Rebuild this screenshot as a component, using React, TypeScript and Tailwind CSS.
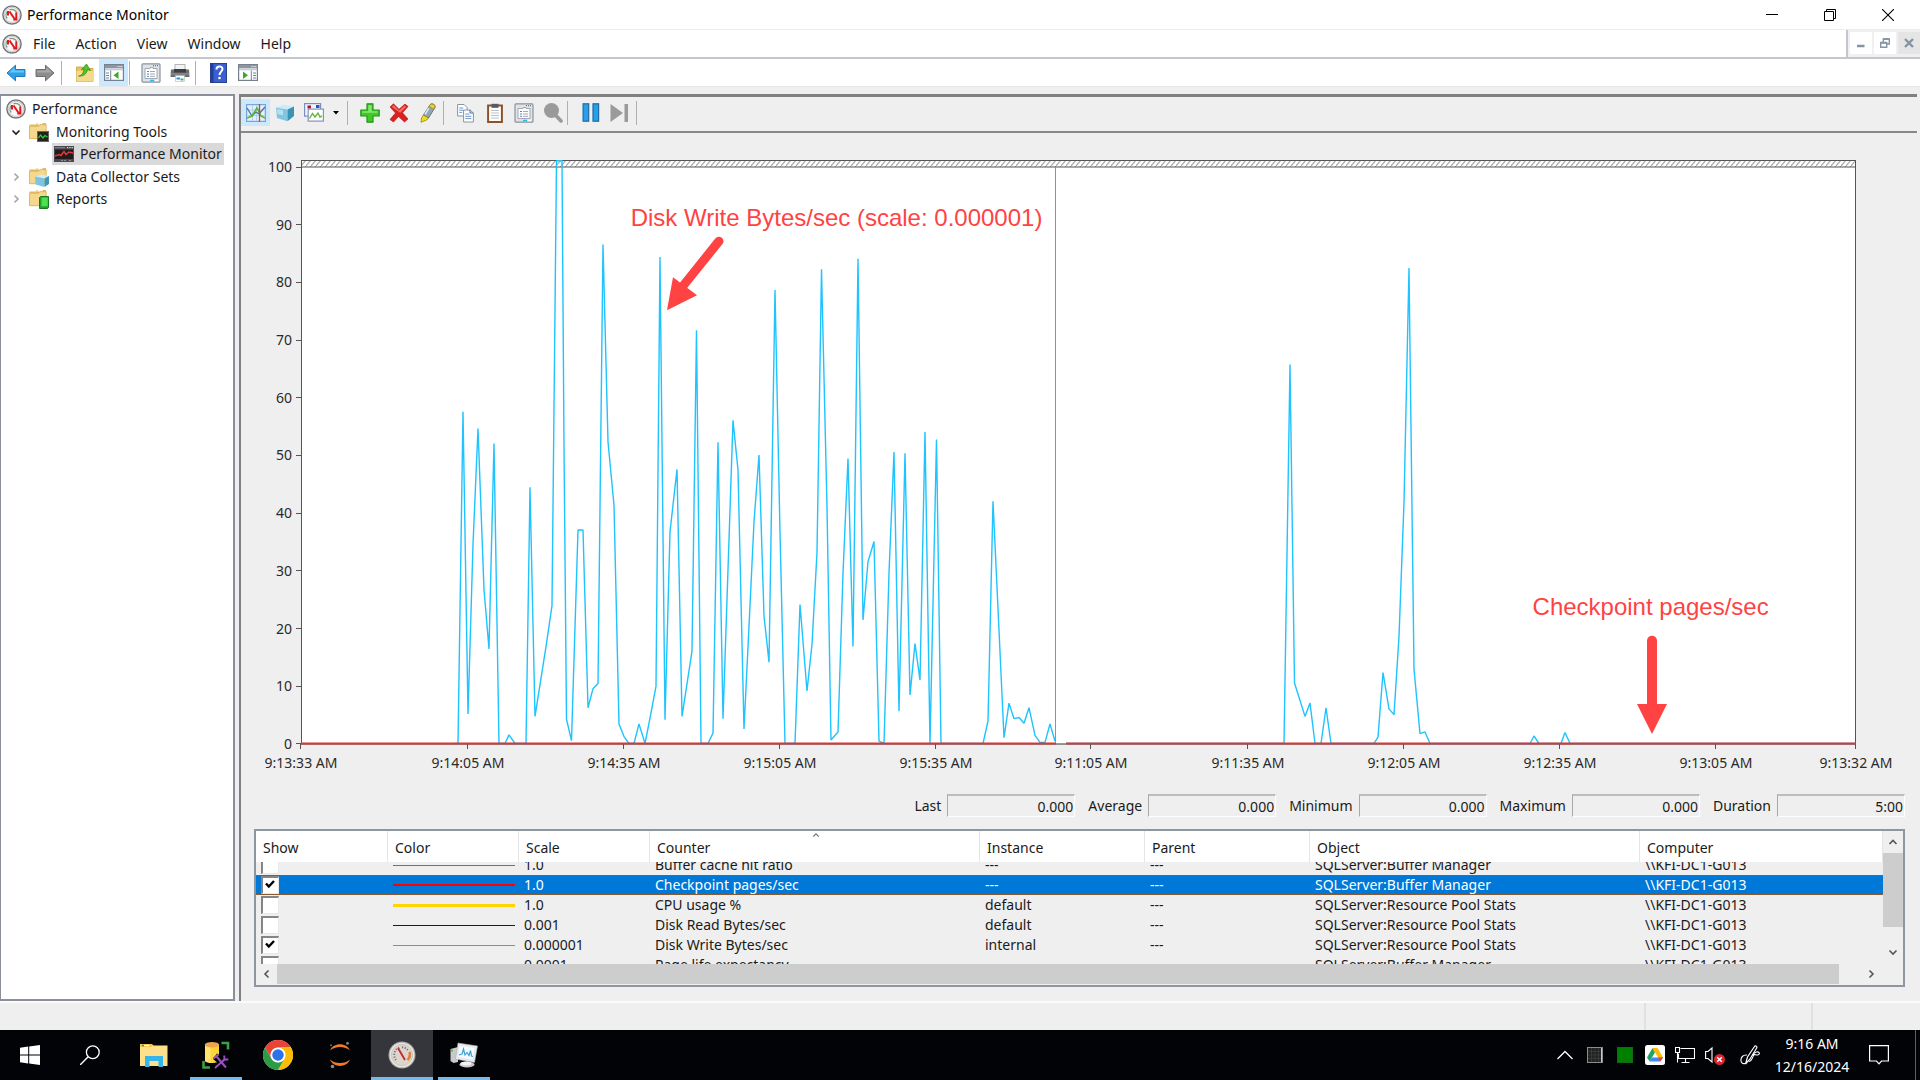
import { useLayoutEffect, useRef, type ReactNode } from "react";

const PLOT_W = 1555;
const PLOT_H = 583;
const BASE_Y = 583;
const UNIT = 5.76;

const writeBytes: [number, number][] = [
  [154, 0], [157, 0], [162, 57.5], [167, 5.1], [172, 34.5], [177, 54.6], [183, 26.7], [188, 16.4], [193, 52], [198, 0],
  [204, 0], [208, 1.5], [214, 0], [225, 0], [229, 44.4], [234, 4.7], [245, 16.8], [251, 23.9], [255.5, 101], [261, 101],
  [263, 51.5], [265.5, 4.2], [270.5, 0.5], [277, 37], [282, 37], [287, 6.2], [292, 9.5], [297, 10.4], [302, 86.5],
  [307, 52.3], [313, 41.3], [318, 3.4], [323, 1.2], [328, 0], [333, 0], [338, 3.4], [344, 0], [349, 4.4], [355, 9.9],
  [359, 84.3], [364, 4.1], [369, 36.7], [376, 47.5], [381, 4.7], [391, 16], [395.5, 71.6], [400, 0], [407, 0], [412, 1.8],
  [417, 52.2], [422, 4.3], [432, 56], [437, 47.4], [443, 2.5], [448, 20.3], [453, 38.4], [458, 50], [463, 22.1],
  [468, 14.1], [474, 78.6], [479, 36.6], [484, 0], [494, 0], [499, 24.1], [506, 9.1], [511, 17.2], [516, 33.1],
  [520.5, 82.2], [526, 40.9], [530, 0.6], [537, 2], [542, 29.5], [547, 49.4], [552, 16.8], [557, 84], [562, 21.4],
  [567, 31.5], [573, 35], [578, 0.4], [583, 0], [588, 29.5], [593, 50.5], [598, 5.6], [604, 50.3], [609, 8.4],
  [614, 17.3], [619, 11], [624, 54], [629, 0], [635.5, 52.7], [640, 0], [682, 0], [687, 3.9], [692, 42], [703, 1],
  [708, 7], [713, 4.3], [718, 4.5], [723, 3.5], [728, 6.2], [734, 1.4], [739, 0.2], [744, 0.2], [749, 3.4], [754, 0.4],
];

const writeBytesOlder: [number, number][] = [
  [765, 0], [983, 0], [989, 65.7], [993.5, 10.5], [1004, 4.7], [1009, 7], [1014, 0], [1020, 0], [1025, 6.2], [1030, 0],
  [1073, 0], [1077, 1.1], [1082, 12.3], [1088, 6], [1093, 5], [1098, 18.5], [1103, 41.8], [1108, 82.4], [1113, 12.9],
  [1119, 1.7], [1124, 2], [1129, 0], [1229, 0], [1233, 1.3], [1238, 0], [1260, 0], [1264, 1.9], [1269, 0], [1554, 0],
];

const toPoints = (data: [number, number][]) => data.map(([x, v]) => `${x},${BASE_Y - 0.5 - v * UNIT}`).join(" ");

const timeTicks = [
  { x: 0, label: "9:13:33 AM" },
  { x: 167, label: "9:14:05 AM" },
  { x: 323, label: "9:14:35 AM" },
  { x: 479, label: "9:15:05 AM" },
  { x: 635, label: "9:15:35 AM" },
  { x: 790, label: "9:11:05 AM" },
  { x: 947, label: "9:11:35 AM" },
  { x: 1103, label: "9:12:05 AM" },
  { x: 1259, label: "9:12:35 AM" },
  { x: 1415, label: "9:13:05 AM" },
  { x: 1555, label: "9:13:32 AM" },
];

const valueTicks = [100, 90, 80, 70, 60, 50, 40, 30, 20, 10, 0];

const stats = [
  { id: "last", label: "Last", value: "0.000" },
  { id: "average", label: "Average", value: "0.000" },
  { id: "minimum", label: "Minimum", value: "0.000" },
  { id: "maximum", label: "Maximum", value: "0.000" },
  { id: "duration", label: "Duration", value: "5:00" },
];

type Counter = {
  on: boolean;
  line: string;
  scale: string;
  name: string;
  instance: string;
  object: string;
  selected?: boolean;
};

const counters: Counter[] = [
  { on: false, line: "h-px bg-[#808000]", scale: "1.0", name: "Buffer cache hit ratio", instance: "---", object: "SQLServer:Buffer Manager" },
  { on: true, line: "h-[2px] bg-[#ff0000]", scale: "1.0", name: "Checkpoint pages/sec", instance: "---", object: "SQLServer:Buffer Manager", selected: true },
  { on: false, line: "h-[3px] bg-[#ffd400]", scale: "1.0", name: "CPU usage %", instance: "default", object: "SQLServer:Resource Pool Stats" },
  { on: false, line: "h-px bg-[#0000ff]", scale: "0.001", name: "Disk Read Bytes/sec", instance: "default", object: "SQLServer:Resource Pool Stats" },
  { on: true, line: "h-px bg-[#00bfff]", scale: "0.000001", name: "Disk Write Bytes/sec", instance: "internal", object: "SQLServer:Resource Pool Stats" },
  { on: false, line: "h-px bg-transparent", scale: "0.0001", name: "Page life expectancy", instance: "---", object: "SQLServer:Buffer Manager" },
];

/* ---------- icons ---------- */

function GaugeIcon() {
  return (
    <svg viewBox="0 0 20 20" className="size-5 shrink-0" aria-hidden="true">
      <circle cx="10" cy="10" r="9.1" fill="#f7f7f7" stroke="#777" strokeWidth="1.5" />
      <circle cx="10" cy="10" r="7.6" fill="none" stroke="#cfcfcf" strokeWidth="1.2" />
      <path d="M5.200 13.500a5.400 5.400 0 0 1 .6-7.300M7.500 4.800a5.600 5.600 0 0 1 7.300 3" fill="none" stroke="#7f9b86" strokeWidth="1.3" />
      <path d="M6 6v4.500M7.500 6.500l5 7.200M14.300 7.500v7h-3" fill="none" stroke="#e5161d" strokeWidth="2" />
    </svg>
  );
}

function ArrowIcon({ forward = false }: { forward?: boolean }) {
  return (
    <svg viewBox="0 0 20 18" className="h-[18px] w-5" aria-hidden="true">
      <g transform={forward ? "translate(20 0) scale(-1 1)" : undefined}>
        <path d="M1 9 9.5 1.2V5.5H19v7H9.5v4.3Z" fill={forward ? "#8d8d8d" : "#2aa1e8"} stroke={forward ? "#6e6e6e" : "#2678b8"} strokeWidth="1" strokeLinejoin="round" />
        <path d="M3 8.6 8.6 3.5V6.5H18v2.1Z" fill={forward ? "#a9a9a9" : "#6cc5f6"} />
      </g>
    </svg>
  );
}

function FolderUpIcon() {
  return (
    <svg viewBox="0 0 20 20" className="size-5" aria-hidden="true">
      <path d="M1.5 4h6l1.5 1.5h9v13h-16.5z" fill="#ecc45c" stroke="#c9a040" strokeWidth=".8" />
      <path d="M1.5 8h16.5v10.500h-16.500z" fill="#f6d98a" />
      <path d="M3.500 13C6.500 12.500 8.500 10.500 9 6L6.500 6.500 11.500 1l4 6.500-3-1C12 10.500 8.500 13.800 3.500 13Z" fill="#4fc32c" stroke="#2f8a17" strokeWidth=".7" />
    </svg>
  );
}

function PaneIcon({ right = false }: { right?: boolean }) {
  return (
    <svg viewBox="0 0 20 17" className="h-[17px] w-5" aria-hidden="true">
      <rect x=".6" y=".6" width="18.8" height="15.8" fill="#fff" stroke="#76818d" strokeWidth="1.2" />
      <rect x="1" y="1" width="18" height="3.4" fill="#8a96a3" />
      <rect x="1" y="5" width="18" height="1.3" fill="#c4ccd4" />
      <path d="M13.500 2.600h1M15.500 2.600h1M17.300 2.600h1" stroke="#fff" strokeWidth="1" />
      {right ? (
        <>
          <path d="M13.300 6.500v10" stroke="#76818d" />
          <path d="M15 9h3M15 11.500h3M15 14h3" stroke="#5b83b7" strokeWidth="1.2" />
          <path d="M5 7.500v7.500l5-3.700Z" fill="#37ac25" />
        </>
      ) : (
        <>
          <path d="M6.700 6.500v10" stroke="#76818d" />
          <path d="M2 9h3M2 11.500h3M2 14h3" stroke="#5b83b7" strokeWidth="1.2" />
          <path d="M14.500 7.500v7.500l-5-3.700Z" fill="#37ac25" />
        </>
      )}
    </svg>
  );
}

function PropertiesIcon() {
  return (
    <svg viewBox="0 0 20 20" className="size-5" aria-hidden="true">
      <rect x="1" y=".8" width="18" height="18.4" rx="1" fill="#dfe3e7" stroke="#8b939b" strokeWidth="1.2" />
      <path d="M12 2.600h5" stroke="#6d7680" strokeWidth="1.3" strokeDasharray="1 1" />
      <path d="M4 5.500h5V4.500h3v1h4v10H4Z" fill="#fff" stroke="#97a0aa" strokeWidth=".9" />
      <path d="M6 8.500h2M6 11h2M6 13.300h2" stroke="#4a8bd0" strokeWidth="1" />
      <path d="M9 8.500h5M9 11h5M9 13.300h5" stroke="#a2a9b1" strokeWidth="1" />
      <path d="M9 17.500h4" stroke="#28b9ee" strokeWidth="1.5" />
      <path d="M14 17.500h3" stroke="#fff" strokeWidth="1.5" />
    </svg>
  );
}

function PrinterIcon() {
  return (
    <svg viewBox="0 0 20 20" className="size-5" aria-hidden="true">
      <rect x="5" y="1.5" width="10" height="6" fill="#f3f3f3" stroke="#a5a5a5" strokeWidth=".8" />
      <path d="M1 6.500h18l.5 7.500H.5Z" fill="#6b6d70" />
      <path d="M4 6h12v3.500H4z" fill="#3c3e41" />
      <path d="M.8 11h18.400" stroke="#97999c" />
      <rect x="5.5" y="12.500" width="9" height="6" fill="#fff" stroke="#b5b5b5" strokeWidth=".6" />
      <path d="M6.500 15.500h3.500" stroke="#2c8fd8" strokeWidth="2" />
      <path d="M10.500 16.500h3" stroke="#45b36b" strokeWidth="2" />
    </svg>
  );
}

function HelpIcon() {
  return (
    <svg viewBox="0 0 17 20" className="h-5 w-[17px]" aria-hidden="true">
      <rect x=".5" y=".5" width="16" height="19" fill="#3a5fd0" stroke="#27408f" />
      <path d="M1 1h2.500v18H1z" fill="#24409f" />
      <path d="M6.500 6.500c0-4 6-4 6-.5 0 2.500-3 2.800-3 6" fill="none" stroke="#fff" strokeWidth="2" />
      <circle cx="9.500" cy="15" r="1.300" fill="#fff" />
    </svg>
  );
}

function ChartViewIcon() {
  return (
    <svg viewBox="0 0 20 18" className="h-[18px] w-5" aria-hidden="true">
      <rect x=".6" y=".6" width="18.8" height="16.8" fill="#e3effb" stroke="#7aa6d6" strokeWidth="1.2" />
      <path d="M1 6h18M1 11.500h18M6.500 1v16M10.500 1v16" stroke="#a9c8ea" strokeWidth=".8" />
      <path d="M1 4l5 8 4-4 3 2 6-7" fill="none" stroke="#4a6fae" strokeWidth="1.3" />
      <path d="M1 14l5-2 5-8 4 8 4 2" fill="none" stroke="#55b839" strokeWidth="1.6" />
      <path d="M13.500 0v18" stroke="#e03a30" strokeWidth="1.3" />
    </svg>
  );
}

function CubeIcon() {
  return (
    <svg viewBox="0 0 20 18" className="h-[18px] w-5" aria-hidden="true">
      <path d="M1 3.500 9 .8l10 1.700-6.500 3Z" fill="#c9ecf6" />
      <path d="M1 3.500 12.500 5.500V17.200L2 14Z" fill="#83c5de" />
      <path d="M12.500 5.500 19 2.500v9.500l-6.500 5.200Z" fill="#3a92b4" />
      <path d="M2 5l6 1.200v5L2.500 10Z" fill="#b5e2f0" />
    </svg>
  );
}

function GraphTypeIcon() {
  return (
    <svg viewBox="0 0 20 19" className="h-[19px] w-5" aria-hidden="true">
      <rect x=".6" y=".6" width="16" height="12.500" fill="#f2f6fc" stroke="#7a8fc0" strokeWidth="1.2" />
      <rect x="3.500" y="2.500" width="3.500" height="3" fill="#b0122e" />
      <rect x="12" y="2" width="3.500" height="3" fill="#2d53c2" />
      <rect x="4.200" y="6.100" width="15.200" height="12" fill="#fff" stroke="#8593b5" strokeWidth="1.2" />
      <path d="M5.500 15.500l3-5 2.500 3.500 3-4 2 4 2-1" fill="none" stroke="#69b441" strokeWidth="1.4" />
    </svg>
  );
}

function PlusIcon() {
  return (
    <svg viewBox="0 0 20 20" className="size-5" aria-hidden="true">
      <path d="M7 .8h6V7h6.200v6H13v6.200H7V13H.8V7H7Z" fill="#3fca24" stroke="#23931a" strokeWidth="1.2" strokeLinejoin="round" />
      <path d="M8.300 2.200h3.400v6.100h6v1.500H2.200V8.300h6.100Z" fill="#84e86c" />
    </svg>
  );
}

function DeleteIcon() {
  return (
    <svg viewBox="0 0 20 20" className="size-5" aria-hidden="true">
      <path d="M4.500.8 10 6.300 16 1l3 2.500-5.500 6.300L19 16l-3.500 3-6-5.500L4.500 19 1 16.500 6.500 10 1 4Z" fill="#dc1f1f" stroke="#a51212" strokeWidth=".6" strokeLinejoin="round" />
      <path d="M4.500 2 10 7.600 15.700 2.500l1.500 1.200-6 6L3 4Z" fill="#f66b62" />
    </svg>
  );
}

function HighlightIcon() {
  return (
    <svg viewBox="0 0 16 20" className="h-5 w-4" aria-hidden="true">
      <path d="M9.500 2.500c1-1.500 2-2 3.500-1.500s2.500 1.500 2 3.500L8.500 15 3.500 12Z" fill="#8fa9b4" stroke="#53646c" strokeWidth=".8" />
      <path d="M10 1.800c1.500-1.500 5-.5 5 2.300l-1.200 2L9 3.500Z" fill="#eecf2b" stroke="#8a7716" strokeWidth=".6" />
      <path d="M3.500 12l5 3-1.800 2L1 19.300 1.500 15Z" fill="#f0dc1f" stroke="#8a7716" strokeWidth=".7" />
      <path d="M8.800 5 5 11.500" stroke="#dbe7ec" strokeWidth="1.5" />
    </svg>
  );
}

function CopyIcon() {
  return (
    <svg viewBox="0 0 17 20" className="h-5 w-[17px]" aria-hidden="true">
      <g fill="#fff" stroke="#8b95a0" strokeWidth="1">
        <path d="M.6 1.500h6.500l3 3v8.500H.6z" />
        <path d="M6.600 7h6.500l3.300 3v9H6.600z" />
      </g>
      <path d="M2.300 5h4M2.300 7.200h4M2.300 9.400h3M8.400 11h4M8.400 13.300h6M8.400 15.600h6" stroke="#6d97cb" strokeWidth="1" />
      <path d="M13 7v3h3.400" fill="none" stroke="#3f6faf" />
    </svg>
  );
}

function PasteIcon() {
  return (
    <svg viewBox="0 0 16 20" className="h-5 w-4" aria-hidden="true">
      <rect x="1.100" y="2.500" width="13.800" height="16.500" fill="#fff" stroke="#8d5227" strokeWidth="2" />
      <rect x="4.500" y=".8" width="7" height="4" fill="#555b61" />
      <path d="M4 7.500h8M4 10h8M4 12.500h8M4 15h8" stroke="#b9c2cb" strokeWidth="1" />
    </svg>
  );
}

function ZoomIcon() {
  return (
    <svg viewBox="0 0 20 20" className="size-5" aria-hidden="true">
      <circle cx="8.500" cy="7.500" r="7.500" fill="#9a9a9a" />
      <path d="M12.500 12l5.500 6" stroke="#9a9a9a" strokeWidth="3.6" strokeLinecap="round" />
    </svg>
  );
}

function PauseIcon() {
  return (
    <svg viewBox="0 0 18 19" className="h-[19px] w-[18px]" aria-hidden="true">
      <g fill="#2b9fe6" stroke="#1a6cab" strokeWidth="1.2">
        <rect x="1.100" y=".8" width="5.600" height="17.400" />
        <rect x="11" y=".8" width="5.600" height="17.400" />
      </g>
    </svg>
  );
}

function StepIcon() {
  return (
    <svg viewBox="0 0 19 18" className="h-[18px] w-[19px]" aria-hidden="true">
      <path d="M.5 0 13 9 .5 18ZM14.500 0h3.500v18h-3.500z" fill="#9a9a9a" />
    </svg>
  );
}

function TreeFolderIcon({ kind }: { kind: "tools" | "sets" | "reports" }) {
  return (
    <svg viewBox="0 0 20 20" className="size-5 shrink-0" aria-hidden="true">
      <path d="M.5 2.500h7V1h9.500v16H.5z" fill="#e3bd63" />
      <path d="M8.500 1.800h5" stroke="#fff" strokeWidth="1.5" />
      <path d="M.5 4.200h9l1.500-1.500h6.200v14H.5z" fill="#f5d88c" stroke="#d3ae58" strokeWidth=".7" />
      {kind === "tools" && (
        <>
          <rect x="8.500" y="9.500" width="11" height="10" fill="#222" stroke="#666" />
          <path d="M9.500 16l2-3 2.500 3 2-2.500 2.500 1.500" fill="none" stroke="#37c93b" strokeWidth="1.3" />
        </>
      )}
      {kind === "sets" && (
        <>
          <path d="M6 9.500 12 7.500l8 1.500-4.500 2.500Z" fill="#cdeef7" />
          <path d="M6 9.500l9.500 2V20L6.500 17.500Z" fill="#7ec4e0" />
          <path d="M15.500 11.500 20 9v8l-4.500 3Z" fill="#4296b8" />
        </>
      )}
      {kind === "reports" && (
        <>
          <path d="M10.500 8.500 12 7.500h7.500v11l-1 1h-8z" fill="#1fa32a" stroke="#0f6f18" strokeWidth=".9" />
          <path d="M12.500 8.500h6.200v8.800h-6.200z" fill="#4fe052" />
        </>
      )}
    </svg>
  );
}

function MonitorTreeIcon() {
  return (
    <svg viewBox="0 0 20 16" className="h-4 w-5 shrink-0" aria-hidden="true">
      <rect width="20" height="16" fill="#4c4c50" />
      <rect x="1" y="3.500" width="18" height="9.500" fill="#231a1c" />
      <path d="M1 1.700h10" stroke="#7f858c" strokeWidth="1.2" />
      <path d="M13 1.700h6" stroke="#d8dde2" strokeWidth="1.2" strokeDasharray="1.3 1" />
      <path d="M1 10l4-1.500 2 1 3-4 2 3 3-2.500 4 1" fill="none" stroke="#e23a3f" strokeWidth="1.5" />
      <path d="M7 14.500h6M15 14.500h3" stroke="#8d9299" strokeDasharray="2 1" />
    </svg>
  );
}

function Chevron({ d, className }: { d: string; className: string }) {
  return (
    <svg viewBox="0 0 10 10" className={className} aria-hidden="true">
      <path d={d} fill="none" stroke="currentColor" strokeWidth="1.6" />
    </svg>
  );
}

const UP = "M1.5 7 5 3.5 8.5 7";
const DOWN = "M1.5 3.5 5 7 8.5 3.5";
const LEFT = "M6.5 1.5 3 5l3.5 3.5";
const RIGHT = "M3.5 1.5 7 5 3.5 8.5";

/* ---------- window chrome ---------- */

function TitleBar() {
  return (
    <header className="flex h-[29px] shrink-0 items-center pr-[3px] pl-[2px]">
      <GaugeIcon />
      <h1 className="flex-1 pl-[5px] text-[14px] text-black">Performance Monitor</h1>
      <button aria-label="Minimize" className="flex h-full w-[58px] items-center justify-center">
        <svg viewBox="0 0 12 12" className="size-3"><path d="M0 5.500h12" stroke="#000" /></svg>
      </button>
      <button aria-label="Restore" className="flex h-full w-[58px] items-center justify-center">
        <svg viewBox="0 0 12 12" className="size-3"><path d="M.5 2.500h9v9h-9zM2.500 2.500v-2h9v9h-2" fill="none" stroke="#000" /></svg>
      </button>
      <button aria-label="Close" className="flex h-full w-[58px] items-center justify-center">
        <svg viewBox="0 0 12 12" className="size-3"><path d="M0 0l12 12M12 0 0 12" stroke="#000" strokeWidth="1.1" /></svg>
      </button>
    </header>
  );
}

function MenuBar() {
  return (
    <div className="flex h-[30px] shrink-0 border-t border-b-2 border-t-[#ededed] border-b-[#c3c6cc]">
      <nav className="flex flex-1 items-center border-r-2 border-[#c3c6cc] pl-[2px]">
        <GaugeIcon />
        <div className="flex gap-5 pl-[11px] text-[14px] text-[#1a1a1a]">
          {["File", "Action", "View", "Window", "Help"].map((item) => (
            <button key={item}>{item}</button>
          ))}
        </div>
      </nav>
      <div className="flex gap-[2px] bg-[#f0f0f3] pt-[2px] pb-[3px] pl-[2px] text-[#8593a3]">
        <button aria-label="Minimize child window" className="flex w-[22px] items-center justify-center bg-white">
          <svg viewBox="0 0 10 10" className="size-[10px]"><path d="M1 8h7.500" stroke="currentColor" strokeWidth="2.5" /></svg>
        </button>
        <button aria-label="Restore child window" className="flex w-[22px] items-center justify-center bg-white">
          <svg viewBox="0 0 10 10" className="size-[10px]"><path d="M.7 4.500h6v4.800h-6zM3.300 4V1h6v5H7" fill="none" stroke="currentColor" strokeWidth="1.4" /><path d="M.5 4.800h6.500M3 1.200h6.500" stroke="currentColor" strokeWidth="1.8" /></svg>
        </button>
        <button aria-label="Close child window" className="flex w-[22px] items-center justify-center bg-[#e5e5e5]">
          <svg viewBox="0 0 10 10" className="size-[10px]"><path d="M1 1l8 8M9 1 1 9" stroke="currentColor" strokeWidth="2.4" /></svg>
        </button>
      </div>
    </div>
  );
}

function Tool({ label, active = false, narrow = false, children }: { label: string; active?: boolean; narrow?: boolean; children: ReactNode }) {
  return (
    <button
      aria-label={label}
      className={`flex h-[27px] shrink-0 items-center justify-center ${narrow ? "w-4" : "w-[29px]"} ${active ? "bg-[#cce8ff]" : ""}`}
    >
      {children}
    </button>
  );
}

function Divider({ className = "" }: { className?: string }) {
  return <span className={`h-6 w-px shrink-0 bg-[#b0b0b0] ${className}`} />;
}

function MainToolbar() {
  return (
    <div className="flex h-[28px] shrink-0 items-center border-b border-[#e6e6e6] pl-px">
      <Tool label="Back"><ArrowIcon /></Tool>
      <Tool label="Forward"><ArrowIcon forward /></Tool>
      <Divider className="mr-2 ml-[2px]" />
      <Tool label="Up one level"><FolderUpIcon /></Tool>
      <Tool label="Show console tree" active><PaneIcon /></Tool>
      <Divider className="mr-1.5 ml-px" />
      <Tool label="Properties"><PropertiesIcon /></Tool>
      <Tool label="Print"><PrinterIcon /></Tool>
      <Divider className="mr-2 ml-px" />
      <Tool label="Help"><HelpIcon /></Tool>
      <Tool label="Show action pane"><PaneIcon right /></Tool>
    </div>
  );
}

function TreePane() {
  return (
    <aside className="w-[235px] shrink-0 border-2 border-l border-[#8a8f9a] bg-white pt-[2px] text-[14px] text-[#1a1a1a]">
      <ul>
        <li>
          <div className="flex h-[22px] items-center gap-[6px] pl-[5px]"><GaugeIcon />Performance</div>
          <ul>
            <li>
              <div className="flex h-[23px] items-center pl-[10px]">
                <Chevron d={DOWN} className="mr-2 size-[10px]" />
                <TreeFolderIcon kind="tools" />
                <span className="pl-[7px]">Monitoring Tools</span>
              </div>
              <div className="ml-[51px] flex h-[22px] w-[172px] items-center gap-[6px] bg-[#d9d9d9] pl-[2px] whitespace-nowrap">
                <MonitorTreeIcon />Performance Monitor
              </div>
            </li>
            <li className="flex h-[23px] items-center pl-[10px]">
              <Chevron d={RIGHT} className="mr-2 size-[10px] text-[#a5a5a5]" />
              <TreeFolderIcon kind="sets" />
              <span className="pl-[7px]">Data Collector Sets</span>
            </li>
            <li className="flex h-[22px] items-center pl-[10px]">
              <Chevron d={RIGHT} className="mr-2 size-[10px] text-[#a5a5a5]" />
              <TreeFolderIcon kind="reports" />
              <span className="pl-[7px]">Reports</span>
            </li>
          </ul>
        </li>
      </ul>
    </aside>
  );
}

function MonitorToolbar() {
  return (
    <div className="flex h-[35px] shrink-0 items-start border-b-2 border-[#888] pt-px">
      <div className="flex items-center">
        <Tool label="View current activity" active><ChartViewIcon /></Tool>
        <Tool label="View log data"><CubeIcon /></Tool>
        <Tool label="Change graph type"><GraphTypeIcon /></Tool>
        <Tool label="Graph type options" narrow>
          <svg viewBox="0 0 6 4" className="h-1 w-1.5"><path d="M0 0h6L3 3.600Z" fill="#000" /></svg>
        </Tool>
        <Divider className="mr-[7px] ml-[3px]" />
        <Tool label="Add"><PlusIcon /></Tool>
        <Tool label="Delete"><DeleteIcon /></Tool>
        <Tool label="Highlight"><HighlightIcon /></Tool>
        <Divider className="mr-[7px] ml-px" />
        <Tool label="Copy properties"><CopyIcon /></Tool>
        <Tool label="Paste counter list"><PasteIcon /></Tool>
        <Tool label="Counter properties"><PropertiesIcon /></Tool>
        <Tool label="Zoom"><ZoomIcon /></Tool>
        <Divider className="mr-2" />
        <Tool label="Freeze display"><PauseIcon /></Tool>
        <Tool label="Update data"><StepIcon /></Tool>
        <Divider className="ml-[2px]" />
      </div>
    </div>
  );
}

/* ---------- chart ---------- */

function Plot() {
  return (
    <svg viewBox={`0 0 ${PLOT_W} ${PLOT_H}`} preserveAspectRatio="none" className="block h-full w-full overflow-visible" role="img" aria-label="Counter history">
      <defs>
        <pattern id="hatch" width="5" height="6" patternUnits="userSpaceOnUse">
          <rect width="5" height="6" fill="#fff" />
          <path d="M0 6 5 0" stroke="#9a9a9a" strokeWidth="1" />
        </pattern>
      </defs>
      <rect width={PLOT_W} height={PLOT_H} fill="#fff" />
      <rect x="0" y="1" width={PLOT_W} height="6" fill="url(#hatch)" />
      <path d={`M0 .5H${PLOT_W}M0 7H${PLOT_W}M.5 0V583M${PLOT_W - 0.5} 0V583`} stroke="#555" strokeWidth="1" fill="none" />
      <path d={`M0 583H${PLOT_W}`} stroke="#333" strokeWidth="1" />
      <polyline points={toPoints(writeBytes)} fill="none" stroke="#1ec3ff" strokeWidth="1.4" strokeLinejoin="bevel" />
      <polyline points={toPoints(writeBytesOlder)} fill="none" stroke="#1ec3ff" strokeWidth="1.4" strokeLinejoin="bevel" />
      <path d="M0 582.500H755M765 582.500H1555" stroke="#d93636" strokeWidth="2" />
      <path d="M754.500 7V582" stroke="#ff6464" strokeWidth="1" />
      <g stroke="#555" strokeWidth="1">
        {timeTicks.map((t) => (
          <path key={t.label} d={`M${t.x - 0.5} 583v5`} />
        ))}
      </g>
      <g fill="#ff4343" stroke="none">
        <path d="M418 81 381 127" stroke="#ff4343" strokeWidth="9" strokeLinecap="round" />
        <path d="M372 117 396 135 366 150Z" />
        <path d="M1351 480V545" stroke="#ff4343" strokeWidth="10" strokeLinecap="round" />
        <path d="M1336 543h30l-15 30Z" />
      </g>
    </svg>
  );
}

function Chart() {
  return (
    <div className="flex min-h-0 flex-1 flex-col pt-[27px] pr-[61px] text-[14px] text-[#2a2a2a]">
      <div className="grid min-h-0 flex-1 grid-cols-[60px_minmax(0,1fr)] grid-rows-[minmax(0,1fr)]">
        <div className="flex flex-col justify-between pt-[7px]">
          {valueTicks.map((v) => (
            <div key={v} className="flex h-0 items-center justify-end gap-1">
              {v}
              <span className="h-px w-[5px] bg-[#555]" />
            </div>
          ))}
        </div>
        <div className="relative min-h-0">
          <Plot />
          <p className="absolute top-[7.5%] left-[21.2%] font-['Liberation_Sans',sans-serif] text-[24px] leading-7 whitespace-nowrap text-[#ff4343]">
            Disk Write Bytes/sec (scale: 0.000001)
          </p>
          <p className="absolute top-[74.2%] left-[79.2%] font-['Liberation_Sans',sans-serif] text-[24px] leading-7 whitespace-nowrap text-[#ff4343]">
            Checkpoint pages/sec
          </p>
        </div>
      </div>
      <div className="ml-[60px] flex h-[50px] items-start pt-[9px]">
        {timeTicks.map((t, i) => (
          <div key={t.label} className="flex basis-0 justify-end" style={{ flexGrow: i === 0 ? 0 : t.x - timeTicks[i - 1].x }}>
            <span className="flex w-0 justify-center whitespace-nowrap">{t.label}</span>
          </div>
        ))}
      </div>
    </div>
  );
}

function Stats() {
  return (
    <div className="flex h-[35px] shrink-0 items-start justify-end gap-[13px] pr-3 text-[14px] text-[#1a1a1a]">
      {stats.map((s) => (
        <div key={s.id} className="flex items-center gap-[6px]">
          <label htmlFor={s.id}>{s.label}</label>
          <input
            id={s.id}
            readOnly
            value={s.value}
            className="h-[23px] w-32 border-t-2 border-r border-b border-l border-t-[#bdbdbd] border-r-white border-b-white border-l-[#a9a9a9] bg-[#efefef] pr-px text-right outline-none"
          />
        </div>
      ))}
    </div>
  );
}

/* ---------- counter list ---------- */

function CounterTable() {
  const viewport = useRef<HTMLDivElement>(null);
  useLayoutEffect(() => {
    if (viewport.current) viewport.current.scrollTop = 7;
  }, []);

  return (
    <div className="mr-3 mb-[14px] ml-[13px] flex h-[158px] shrink-0 flex-col border-2 border-[#8f96a0] bg-[#efefef] text-[14px] text-[#1a1a1a]">
      <div className="flex min-h-0 flex-1">
        <div ref={viewport} className="relative h-[133px] flex-1 overflow-hidden">
          <table className="w-full table-fixed border-separate border-spacing-0">
            <colgroup>
              <col className="w-[132px]" />
              <col className="w-[131px]" />
              <col className="w-[131px]" />
              <col className="w-[330px]" />
              <col className="w-[165px]" />
              <col className="w-[165px]" />
              <col className="w-[330px]" />
              <col />
            </colgroup>
            <thead>
              <tr className="h-[31px]">
                {["Show", "Color", "Scale", "Counter", "Instance", "Parent", "Object", "Computer"].map((h) => (
                  <th key={h} className="sticky top-0 z-10 border-r border-[#e5e5e5] bg-white p-0 pt-[3px] pl-[7px] text-left leading-5 font-normal">
                    {h}
                    {h === "Counter" && <Chevron d={UP} className="absolute top-0 left-[162px] size-2 text-[#777]" />}
                  </th>
                ))}
              </tr>
            </thead>
            <tbody>
              {counters.map((c) => {
                const cell = c.selected ? "border-y border-[#8a5a33] bg-[#0078d7] p-0 pl-[5px]" : "p-0 pl-[5px]";
                return (
                  <tr key={c.name} className={`h-5 leading-[18px] whitespace-nowrap ${c.selected ? "text-white" : ""}`}>
                    <td className={cell}>
                      <span className="relative block size-[18px]">
                        <input
                          type="checkbox"
                          defaultChecked={c.on}
                          aria-label={`Show ${c.name}`}
                          className="block size-[18px] appearance-none border border-t-2 border-l-2 border-[#e8e8e8] border-t-[#858585] border-l-[#858585] bg-white peer"
                        />
                        <svg viewBox="0 0 10 10" className="pointer-events-none invisible absolute top-[3px] left-1 size-[10px] peer-checked:visible" aria-hidden="true">
                          <path d="M1 4.500 3.800 7.500 9 2" fill="none" stroke="#000" strokeWidth="2.4" />
                        </svg>
                      </span>
                    </td>
                    <td className={cell}><span className={`mr-1 block ${c.line}`} /></td>
                    <td className={cell}>{c.scale}</td>
                    <td className={cell}>{c.name}</td>
                    <td className={cell}>{c.instance}</td>
                    <td className={cell}>---</td>
                    <td className={cell}>{c.object}</td>
                    <td className={cell}>\\KFI-DC1-G013</td>
                  </tr>
                );
              })}
            </tbody>
          </table>
        </div>
        <div className="flex w-5 shrink-0 flex-col text-[#555]">
          <button aria-label="Scroll up" className="flex h-[22px] items-center justify-center"><Chevron d={UP} className="size-[10px]" /></button>
          <div className="h-[74px] bg-[#cdcdcd]" />
          <div className="flex-1" />
          <button aria-label="Scroll down" className="mb-[2px] flex h-5 items-center justify-center"><Chevron d={DOWN} className="size-[10px]" /></button>
        </div>
      </div>
      <div className="mb-px flex h-5 shrink-0 text-[#555]">
        <button aria-label="Scroll left" className="flex w-[21px] items-center justify-center"><Chevron d={LEFT} className="size-[10px]" /></button>
        <div className="flex-1 bg-[#cdcdcd]" />
        <button aria-label="Scroll right" className="ml-5 flex w-6 items-center justify-center"><Chevron d={RIGHT} className="size-[10px]" /></button>
        <div className="w-5" />
      </div>
    </div>
  );
}

/* ---------- taskbar ---------- */

function TaskItem({ label, open = false, active = false, children }: { label: string; open?: boolean; active?: boolean; children: ReactNode }) {
  return (
    <button aria-label={label} className={`relative flex h-full w-[62px] items-center justify-center ${active ? "bg-[#35363b]" : ""}`}>
      {children}
      {open && <span className={`absolute bottom-0 h-[3px] bg-[#76b9ed] ${active ? "inset-x-0" : "inset-x-[5px]"}`} />}
    </button>
  );
}

function Taskbar() {
  return (
    <footer className="flex h-[50px] shrink-0 items-center bg-[#020307] text-white">
      <button aria-label="Start" className="flex h-full w-[60px] items-center justify-center">
        <svg viewBox="0 0 20 20" className="size-5"><path d="M0 2.800 8.200 1.600V9.500H0ZM9.200 1.500 20 0v9.500H9.200ZM0 10.500h8.200v7.900L0 17.200ZM9.200 10.500H20V20L9.200 18.500Z" fill="#fff" /></svg>
      </button>
      <button aria-label="Search" className="mr-[3px] flex h-full w-[60px] items-center justify-center">
        <svg viewBox="0 0 20 20" className="size-5"><circle cx="12.800" cy="7.200" r="6.400" fill="none" stroke="#fff" strokeWidth="1.3" /><path d="M8.200 11.800 0 20" stroke="#fff" strokeWidth="1.4" /></svg>
      </button>
      <TaskItem label="File Explorer">
        <svg viewBox="0 0 28 24" className="h-6 w-7">
          <path d="M0 1h12l2 2h13v20H0Z" fill="#f6c342" />
          <path d="M0 4h11l2-1.500h14.500V23H0Z" fill="#ffe08a" />
          <path d="M2 2.500h2" stroke="#1d9e8b" strokeWidth="1.5" /><path d="M4 2.500h5" stroke="#fff" strokeWidth="1.3" />
          <path d="M5 24V13h18v11h-4.500v-6h-9v6Z" fill="#37b4ea" />
        </svg>
      </TaskItem>
      <TaskItem label="SQL Server Management Studio" open>
        <svg viewBox="0 0 28 28" className="size-7">
          <path d="M3 4v15.500c0 1.500 3 2.500 7 2.500s7-1 7-2.500V4Z" fill="#fbd53a" />
          <path d="M3 4v15.500c0 1.300 2.500 2.200 5.500 2.400V4Z" fill="#ffe36e" />
          <ellipse cx="10" cy="3.800" rx="7.200" ry="2.800" fill="#f0a44b" />
          <path d="M19.500 2h6.500v6.500M1.500 20v6.500H8" fill="none" stroke="#3c9f46" strokeWidth="2.6" />
          <path d="M11 18 15 12.500 18.500 14.500 20 17 16 22Z" fill="#000" />
          <path d="M11.500 17.500 16.500 13.500M14.500 15.500l9.500 11M22.500 18.500 13 27" fill="none" stroke="#9b4fc4" strokeWidth="2" />
          <path d="M22.300 14.500v4h4" fill="none" stroke="#9b4fc4" strokeWidth="1.8" />
        </svg>
      </TaskItem>
      <TaskItem label="Google Chrome">
        <svg viewBox="0 0 48 48" className="size-[30px]">
          <circle cx="24" cy="24" r="24" fill="#fff" />
          <path d="M24 12h20.800A24 24 0 0 0 3.200 12l10.400 18A12 12 0 0 1 24 12Z" fill="#ea4335" />
          <path d="M34.400 30 24 48A24 24 0 0 0 44.800 12H24a12 12 0 0 1 10.400 18Z" fill="#fbbc04" />
          <path d="M13.600 30 3.200 12A24 24 0 0 0 24 48l10.400-18a12 12 0 0 1-20.800 0Z" fill="#2d9b46" />
          <circle cx="24" cy="24" r="11.500" fill="#fff" /><circle cx="24" cy="24" r="9.200" fill="#2b74e8" />
        </svg>
      </TaskItem>
      <TaskItem label="Jupyter">
        <svg viewBox="0 0 22 28" className="h-7 w-[22px]">
          <path d="M1 9.500C4 1 18 1 21 9.500 16 4.800 6 4.800 1 9.500ZM1 18.500C4 27 18 27 21 18.500 16 23.200 6 23.200 1 18.500Z" fill="#f37726" />
          <circle cx="18.500" cy="2.300" r="1.500" fill="#7b7b7d" /><circle cx="3.500" cy="25.500" r="1.800" fill="#8b8b8d" /><circle cx="2" cy="4.200" r="1" fill="#6a6a6c" />
        </svg>
      </TaskItem>
      <TaskItem label="Performance Monitor" open active>
        <svg viewBox="0 0 28 28" className="size-7">
          <circle cx="14" cy="14" r="13.500" fill="#a9abad" /><circle cx="14" cy="14" r="12.300" fill="#eeeae4" /><circle cx="14" cy="14" r="10.700" fill="#dcd6cf" stroke="#b5b0aa" strokeWidth=".6" />
          <path d="M8 19A8 8 0 0 1 12 6.300M14 6.200a8 8 0 0 1 6 3" fill="none" stroke="#777" strokeWidth="2" strokeDasharray="1.2 1.5" />
          <path d="M21.500 11a8 8 0 0 1-2 8" fill="none" stroke="#e08136" strokeWidth="2.6" />
          <path d="M10 7 17 19" stroke="#c7252c" strokeWidth="1.8" />
        </svg>
      </TaskItem>
      <TaskItem label="Resource Monitor" open>
        <svg viewBox="0 0 28 26" className="h-[26px] w-7">
          <path d="M.5 7 8 5v15l-4.500 1L.5 19Z" fill="#c9c9c9" /><path d="M1 8.500h2" stroke="#59c12f" strokeWidth="2" />
          <path d="M8 1l19.500 3-3 16.500L5.500 17Z" fill="#eee" stroke="#aaa" strokeWidth=".6" />
          <path d="M9.300 3l16 2.500-2.300 12.700L7.500 15.200Z" fill="#f6fbff" stroke="#cfd8df" strokeWidth=".5" />
          <path d="M9 13l3-1 1.500-5 1.500 6 2-2.500 2 3 1.500-5 1 5.500 1.500.5" fill="none" stroke="#3aa0d8" strokeWidth="1.2" />
          <ellipse cx="17" cy="22.500" rx="7.500" ry="3" fill="#c9c9c9" /><ellipse cx="16" cy="21.500" rx="5.500" ry="2" fill="#f3f3f3" />
        </svg>
      </TaskItem>
      <div className="flex-1" />
      <div className="flex h-full items-center">
        <button aria-label="Show hidden icons" className="flex w-[30px] justify-center">
          <svg viewBox="0 0 16 10" className="h-[10px] w-4"><path d="M.5 9 8 1.500 15.500 9" fill="none" stroke="#fff" strokeWidth="1.3" /></svg>
        </button>
        <button aria-label="Memory usage" className="flex w-[30px] justify-center">
          <svg viewBox="0 0 16 16" className="size-4"><rect x=".5" y=".5" width="15" height="15" fill="#222" stroke="#8d8d8d" /><path d="M4.500 1v14M8 1v14M11.500 1v14M1 4.500h14M1 8h14M1 11.500h14" stroke="#444" strokeWidth=".6" /><path d="M14.500 1v14" stroke="#c9c9c9" /></svg>
        </button>
        <button aria-label="CPU usage" className="flex w-[30px] justify-center"><span className="size-4 border border-[#136a13] bg-[#008000]" /></button>
        <button aria-label="Google Drive" className="flex w-[30px] justify-center">
          <svg viewBox="0 0 20 20" className="size-5">
            <rect width="20" height="20" rx="2.500" fill="#fff" />
            <path d="M7.500 3 10 7.300 4.700 16.500 2 12.500Z" fill="#1fa463" />
            <path d="M7.500 3h5l5.500 9.500h-5Z" fill="#ffba00" /><path d="M7 12.500h11l-2.700 4H4.700Z" fill="#4285f4" />
            <path d="M13 12.500h5l-2.700 4Z" fill="#ea4335" />
          </svg>
        </button>
        <button aria-label="Network" className="flex w-[30px] justify-center">
          <svg viewBox="0 0 20 17" className="h-[17px] w-5"><path d="M5.500 1.500H19.500v10H3.500V6.500M10.500 11.500v4M6.500 15.500h8M.5.500h4v5h-4zM2.500 5.500v10" fill="none" stroke="#fff" strokeWidth="1.1" /></svg>
        </button>
        <button aria-label="Volume muted" className="flex w-[30px] justify-center">
          <svg viewBox="0 0 20 20" className="size-5"><path d="M.6 6.500H3L7 3v14l-4-3.500H.6Z" fill="none" stroke="#fff" strokeWidth="1.1" /><circle cx="14.500" cy="14.500" r="5.500" fill="#dd2430" /><path d="M12.200 12.200l4.600 4.600M16.800 12.200l-4.600 4.600" stroke="#fff" strokeWidth="1.4" /></svg>
        </button>
        <button aria-label="Pen workspace" className="flex w-10 justify-center">
          <svg viewBox="0 0 20 20" className="size-5"><path d="M5.500 19 7.500 12 14.500 1.500c1-1.500 3.200 0 2.200 1.500L10 14Z" fill="none" stroke="#fff" strokeWidth="1.2" /><path d="M7 10c-4-.5-6.500 2.500-6 6 .2 2.200 2 3 4 2.500M12.500 10.500c2.500-4 6-4.500 6.800-2.500.5 1.700-2 2.500-5 1.500-3 4-2.500 7.500-5.500 7" fill="none" stroke="#fff" strokeWidth="1.1" /></svg>
        </button>
        <div className="w-[84px] text-center text-[14px] leading-[23px]"><div>9:16 AM</div><div>12/16/2024</div></div>
        <button aria-label="Notifications" className="flex w-[50px] justify-center">
          <svg viewBox="0 0 20 20" className="size-5"><path d="M.6.6H19.400V16H12.500L10 18.800 7.500 16H.6Z" fill="none" stroke="#fff" strokeWidth="1.2" /></svg>
        </button>
        <button aria-label="Show desktop" className="ml-[11px] h-full w-[5px] border-l border-[#5f6064]" />
      </div>
    </footer>
  );
}

export default function App() {
  return (
    <div className="flex h-screen flex-col overflow-hidden bg-white font-['Noto_Sans','Open_Sans',sans-serif] leading-5">
      <TitleBar />
      <MenuBar />
      <MainToolbar />
      <main className="flex min-h-0 flex-1 gap-1 bg-[#efefef] pt-[7px]">
        <TreePane />
        <section className="mr-[3px] flex min-w-0 flex-1 flex-col border-t-[3px] border-l-2 border-[#808080] pt-px">
          <MonitorToolbar />
          <Chart />
          <Stats />
          <CounterTable />
        </section>
      </main>
      <div className="flex h-[29px] shrink-0 justify-end border-t-2 border-[#fbfbfb] bg-[#efefef]">
        <span className="w-[167px] border-l-2 border-[#e0e0e0]" />
        <span className="w-[109px] border-l-2 border-[#e0e0e0]" />
      </div>
      <Taskbar />
    </div>
  );
}
